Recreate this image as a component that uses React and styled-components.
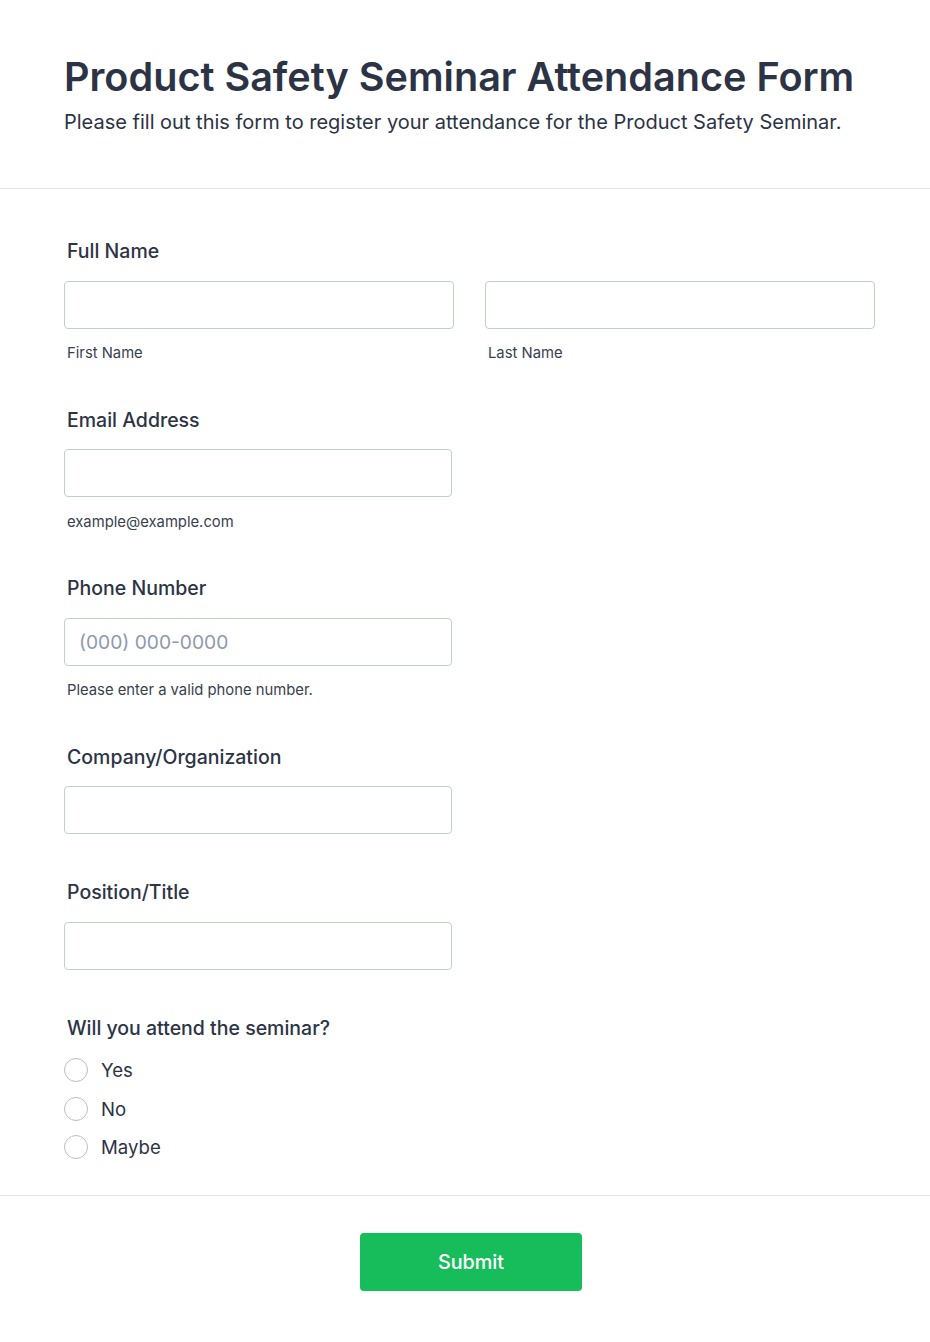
import styled, { createGlobalStyle } from "styled-components";

const GlobalStyle = createGlobalStyle`
  html, body {
    margin: 0;
    padding: 0;
    background: #ffffff;
  }
  body {
    font-family: Inter, "Noto Sans", "Liberation Sans", sans-serif;
    color: #2c3345;
  }
  * {
    box-sizing: border-box;
  }
`;

const App = () => {
  return (
    <Page>
      <GlobalStyle />
      <Header>
        <Title>Product Safety Seminar Attendance Form</Title>
        <Subtitle>
          Please fill out this form to register your attendance for the Product
          Safety Seminar.
        </Subtitle>
      </Header>

      <FormBody>
        <Field $gap={44.5}>
          <Label>Full Name</Label>
          <NameRow>
            <Column>
              <Input type="text" />
              <SubLabel>First Name</SubLabel>
            </Column>
            <Column>
              <Input type="text" />
              <SubLabel>Last Name</SubLabel>
            </Column>
          </NameRow>
        </Field>

        <Field $gap={44.5}>
          <Label>Email Address</Label>
          <Input type="email" $width={388} />
          <SubLabel>example@example.com</SubLabel>
        </Field>

        <Field $gap={44.5}>
          <Label>Phone Number</Label>
          <Input type="tel" $width={388} placeholder="(000) 000-0000" />
          <SubLabel>Please enter a valid phone number.</SubLabel>
        </Field>

        <Field $gap={46}>
          <Label>Company/Organization</Label>
          <Input type="text" $width={388} />
        </Field>

        <Field $gap={46}>
          <Label>Position/Title</Label>
          <Input type="text" $width={388} />
        </Field>

        <Field $gap={36}>
          <Label $tight>Will you attend the seminar?</Label>
          <RadioList>
            {["Yes", "No", "Maybe"].map((opt) => (
              <RadioRow key={opt}>
                <RadioCircle type="radio" name="attend" value={opt} />
                <RadioText>{opt}</RadioText>
              </RadioRow>
            ))}
          </RadioList>
        </Field>
      </FormBody>

      <Footer>
        <SubmitButton type="button">Submit</SubmitButton>
      </Footer>
    </Page>
  );
};

export default App;

const Page = styled.div`
  width: 930px;
  min-height: 1342px;
  background: #ffffff;
`;

const Header = styled.header`
  padding: 53px 64px 53px;
  border-bottom: 1px solid #e3e5ec;
`;

const Title = styled.h1`
  margin: 0;
  font-size: 39.6px;
  line-height: 48px;
  font-weight: 600;
  color: #2c3345;
`;

const Subtitle = styled.p`
  margin: 8px 0 0;
  font-size: 20px;
  line-height: 26px;
  font-weight: 400;
  color: #2c3345;
`;

const FormBody = styled.div`
  padding: 50px 55px 0 64px;
  border-bottom: 1px solid #e3e5ec;
`;

const Field = styled.div`
  display: flex;
  flex-direction: column;
  align-items: flex-start;
  padding-bottom: ${(p) => p.$gap}px;
`;

const Label = styled.label`
  display: block;
  padding-left: 3px;
  font-size: 19.5px;
  line-height: 24px;
  font-weight: 500;
  color: #2c3345;
  margin-bottom: ${(p) => (p.$tight ? 18.5 : 17.5)}px;
`;

const NameRow = styled.div`
  display: grid;
  grid-template-columns: 390px 390px;
  column-gap: 31px;
`;

const Column = styled.div`
  display: flex;
  flex-direction: column;
`;

const Input = styled.input`
  width: ${(p) => (p.$width ? `${p.$width}px` : "100%")};
  height: 48px;
  margin: 0;
  padding: 0 14px;
  border: 1px solid #c3cad8;
  border-radius: 4px;
  background: #ffffff;
  font-family: Inter, "Noto Sans", "Liberation Sans", sans-serif;
  font-size: 19.2px;
  color: #2c3345;
  outline: none;

  &::placeholder {
    color: #8d99ad;
  }
`;

const SubLabel = styled.span`
  display: block;
  margin-top: 14.5px;
  padding-left: 3px;
  font-size: 14.8px;
  line-height: 20px;
  color: #38414f;
`;

const RadioList = styled.div`
  display: flex;
  flex-direction: column;
  gap: 14.5px;
`;

const RadioRow = styled.label`
  display: flex;
  align-items: center;
  gap: 13px;
  height: 24px;
`;

const RadioCircle = styled.input`
  appearance: none;
  width: 24px;
  height: 24px;
  margin: 0;
  border: 1.5px solid #b8bdc9;
  border-radius: 50%;
  background: #ffffff;
`;

const RadioText = styled.span`
  font-size: 18.6px;
  line-height: 24px;
  color: #2c3345;
`;

const Footer = styled.div`
  display: flex;
  justify-content: center;
  padding: 37px 0 51px 12px;
`;

const SubmitButton = styled.button`
  width: 222px;
  height: 58px;
  border: none;
  border-radius: 4px;
  background: #18bd5b;
  color: #ffffff;
  font-family: Inter, "Noto Sans", "Liberation Sans", sans-serif;
  font-size: 19.8px;
  font-weight: 500;
  cursor: pointer;
`;
